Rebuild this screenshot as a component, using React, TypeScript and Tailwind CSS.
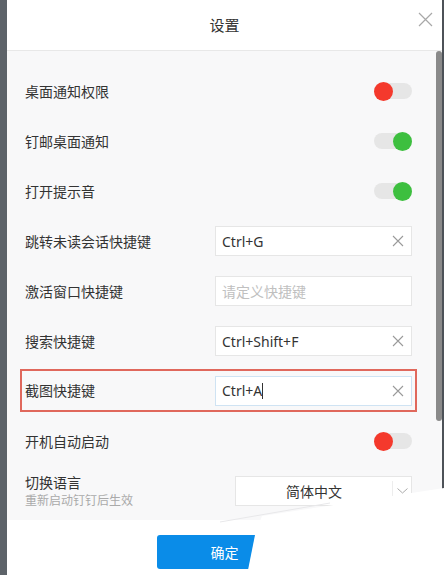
import React from "react";

const font = { fontFamily: '"Noto Sans", "Noto Sans CJK SC", sans-serif' };

function Toggle({ on }: { on: boolean }) {
  return (
    <div className="relative ml-auto flex h-[18px] w-[38px] items-center">
      <div className="h-[16px] w-full rounded-full bg-[#e6e6e6]" />
      {on ? (
        <div className="absolute right-0 h-[19px] w-[19px] rounded-full bg-[#3dbf3f]" />
      ) : (
        <div className="absolute left-0 h-[19px] w-[19px] rounded-full bg-[#f4392c]" />
      )}
    </div>
  );
}

function ClearIcon() {
  return (
    <svg width="12" height="12" viewBox="0 0 12 12" className="shrink-0">
      <path d="M1 1L11 11M11 1L1 11" stroke="#9a9a9a" strokeWidth="1.1" fill="none" />
    </svg>
  );
}

function KeyInput({
  value,
  placeholder,
  focused,
}: {
  value?: string;
  placeholder?: string;
  focused?: boolean;
}) {
  return (
    <div
      className={
        "ml-auto flex h-[30px] w-[197px] items-center bg-white pl-[6px] pr-[7px] text-[14px] " +
        (focused ? "border border-[#cfe3f3]" : "border border-[#e6e6e6]")
      }
    >
      {value ? (
        <span className="flex-1 text-[#333]">
          {value}
          {focused && <span className="inline-block h-[16px] w-px translate-y-[3px] bg-[#333]" />}
        </span>
      ) : (
        <span className="flex-1 text-[#c0c0c0]">{placeholder}</span>
      )}
      {value && <ClearIcon />}
    </div>
  );
}

function Row({ label, children }: { label: string; children: React.ReactNode }) {
  return (
    <div className="flex h-[50px] items-center px-[5px]">
      <span className="text-[14px] text-[#333]">{label}</span>
      {children}
    </div>
  );
}

export default function App() {
  return (
    <div className="relative flex h-[575px] w-[444px] overflow-hidden bg-[#5d6369]" style={font}>
      <div className="w-[7px] shrink-0 bg-[#5d6369]" />
      <div className="flex w-[435px] shrink-0 flex-col bg-white">
        {/* header */}
        <div className="relative flex h-[51px] shrink-0 items-center justify-center border-b border-[#e8e8e8]">
          <span className="text-[15px] text-[#333]">设置</span>
          <svg
            width="15"
            height="15"
            viewBox="0 0 15 15"
            className="absolute right-[9px] top-[12px]"
          >
            <path d="M1 1L14 14M14 1L1 14" stroke="#a8a8a8" strokeWidth="1.2" fill="none" />
          </svg>
        </div>

        {/* body */}
        <div className="flex h-[469px] shrink-0 bg-[#f8f8f9]">
          <div className="w-[410px] shrink-0 pl-[13px] pt-[15px]">
            <Row label="桌面通知权限">
              <Toggle on={false} />
            </Row>
            <Row label="钉邮桌面通知">
              <Toggle on />
            </Row>
            <Row label="打开提示音">
              <Toggle on />
            </Row>
            <Row label="跳转未读会话快捷键">
              <KeyInput value="Ctrl+G" />
            </Row>
            <Row label="激活窗口快捷键">
              <KeyInput placeholder="请定义快捷键" />
            </Row>
            <Row label="搜索快捷键">
              <KeyInput value="Ctrl+Shift+F" />
            </Row>
            <div className="h-[50px] py-[3px]">
              <div className="flex h-[43px] items-center border-2 border-[#e0685c] px-[3px]">
                <span className="text-[14px] text-[#333]">截图快捷键</span>
                <KeyInput value="Ctrl+A" focused />
              </div>
            </div>
            <Row label="开机自动启动">
              <Toggle on={false} />
            </Row>
            <div className="flex h-[50px] items-center px-[5px]">
              <div className="flex flex-col">
                <span className="text-[14px] leading-[19px] text-[#333]">切换语言</span>
                <span className="text-[12px] leading-[18px] text-[#aaa]">重新启动钉钉后生效</span>
              </div>
              <div className="ml-auto flex h-[30px] w-[177px] items-center border border-[#e6e6e6] bg-white">
                <span className="flex-1 text-center text-[14px] text-[#333]">简体中文</span>
                <div className="flex h-[20px] w-[19px] items-center justify-center border-l border-[#ededed]">
                  <svg width="11" height="6" viewBox="0 0 11 6">
                    <path d="M0.5 0.5L5.5 5L10.5 0.5" stroke="#aaa" strokeWidth="1" fill="none" />
                  </svg>
                </div>
              </div>
            </div>
          </div>
          <div className="flex-1 pl-[19px]">
            <div className="h-[370px] w-[6px] rounded-full bg-[#8a8a8a]" />
          </div>
        </div>

        {/* footer */}
        <div className="flex flex-1 justify-center bg-white pt-[15px]">
          <button className="h-[34px] w-[135px] rounded-[3px] bg-[#0a8ce8] text-[14px] text-white">
            确定
          </button>
        </div>
      </div>
      <div className="flex-1 bg-[#4d5258]" />

      {/* white cover over bottom right */}
      <svg className="absolute left-0 top-0" width="444" height="575" viewBox="0 0 444 575">
        <polygon points="255,535 262,516 444,488 444,575 247,575" fill="#ffffff" />
        <path d="M220,522 L330,503" stroke="#e8e8ea" strokeWidth="1" />
      </svg>
    </div>
  );
}
